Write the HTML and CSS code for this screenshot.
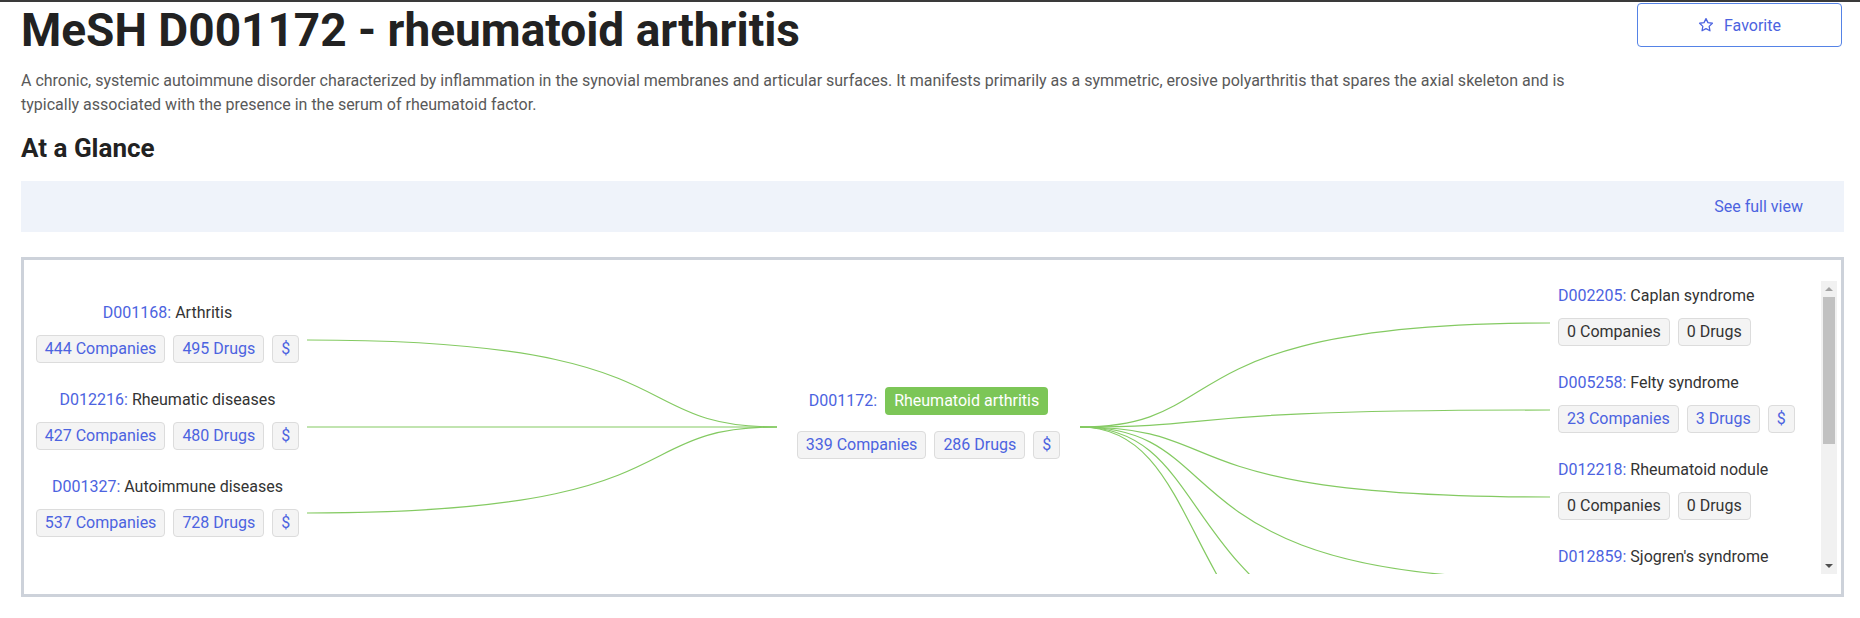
FILE: index.html
```html
<!DOCTYPE html>
<html lang="en">
<head>
  <meta charset="UTF-8" />
  <meta name="viewport" content="width=device-width, initial-scale=1.0"/>
  <title>MeSH D001172 - rheumatoid arthritis</title>
  <link rel="stylesheet" href="styles.css">
</head>
<body>

  <div class="page">
    <div class="header">
      <h1>MeSH D001172 - rheumatoid arthritis</h1>
      <button class="fav-btn" type="button">
        <svg width="16" height="16" viewBox="0 0 16 16">
          <path d="M8 1.6l1.95 4.05 4.45.6-3.25 3.1.8 4.4L8 11.6l-3.95 2.15.8-4.4L1.6 6.250l4.45-.6z" fill="none" stroke="#4c63e0" stroke-width="1.3" stroke-linejoin="round"/>
        </svg>
        Favorite
      </button>
    </div>

    <p class="desc">A chronic, systemic autoimmune disorder characterized by inflammation in the synovial membranes and articular surfaces. It manifests primarily as a symmetric, erosive polyarthritis that spares the axial skeleton and is typically associated with the presence in the serum of rheumatoid factor.</p>

    <h2>At a Glance</h2>

    <div class="glance-bar">
      <a href="#" class="full-view">See full view</a>
    </div>

    <div class="graph-box">
      <div class="graph">
        <svg class="links" width="1797" height="293" viewBox="0 0 1797 293">
          <g fill="none" stroke="#84ca62" stroke-width="1.2">
            <path d="M283,59 C676,59 596,146 753,146"/>
            <path d="M283,146 L753,146"/>
            <path d="M283,232 C676,232 596,146 753,146"/>
            <path d="M1056,146 C1213,146 1133,42 1526,42"/>
            <path d="M1056,146 C1213,146 1133,129 1526,129"/>
            <path d="M1056,146 C1213,146 1133,216 1526,216"/>
            <path d="M1056,146 C1213,146 1133,298 1526,298"/>
            <path d="M1056,146 C1213,146 1133,389 1526,389"/>
            <path d="M1056,146 C1213,146 1133,476 1526,476"/>
          </g>
        </svg>

        <div class="col col-left">
          <div class="node">
            <div class="label"><a href="#">D001168:</a> Arthritis</div>
            <div class="chips">
              <span class="chip">444 Companies</span>
              <span class="chip">495 Drugs</span>
              <span class="chip">$</span>
            </div>
          </div>
          <div class="node">
            <div class="label"><a href="#">D012216:</a> Rheumatic diseases</div>
            <div class="chips">
              <span class="chip">427 Companies</span>
              <span class="chip">480 Drugs</span>
              <span class="chip">$</span>
            </div>
          </div>
          <div class="node">
            <div class="label"><a href="#">D001327:</a> Autoimmune diseases</div>
            <div class="chips">
              <span class="chip">537 Companies</span>
              <span class="chip">728 Drugs</span>
              <span class="chip">$</span>
            </div>
          </div>
        </div>

        <div class="col col-center">
          <div class="node">
            <div class="label main-label"><a href="#">D001172:</a> <span class="current">Rheumatoid arthritis</span></div>
            <div class="chips">
              <span class="chip">339 Companies</span>
              <span class="chip">286 Drugs</span>
              <span class="chip">$</span>
            </div>
          </div>
        </div>

        <div class="col col-right">
          <div class="node">
            <div class="label"><a href="#">D002205:</a> Caplan syndrome</div>
            <div class="chips">
              <span class="chip empty">0 Companies</span>
              <span class="chip empty">0 Drugs</span>
            </div>
          </div>
          <div class="node">
            <div class="label"><a href="#">D005258:</a> Felty syndrome</div>
            <div class="chips">
              <span class="chip">23 Companies</span>
              <span class="chip">3 Drugs</span>
              <span class="chip">$</span>
            </div>
          </div>
          <div class="node">
            <div class="label"><a href="#">D012218:</a> Rheumatoid nodule</div>
            <div class="chips">
              <span class="chip empty">0 Companies</span>
              <span class="chip empty">0 Drugs</span>
            </div>
          </div>
          <div class="node">
            <div class="label"><a href="#">D012859:</a> Sjogren's syndrome</div>
          </div>
        </div>
      </div>

      <div class="scrollbar">
        <div class="sb-btn"><span class="arrow-up"></span></div>
        <div class="sb-track"><div class="sb-thumb"></div></div>
        <div class="sb-btn"><span class="arrow-down"></span></div>
      </div>
    </div>
  </div>

</body>
</html>
```

FILE: styles.css
```css
body {
  margin: 0;
  font-family: Roboto, "Liberation Sans", Arial, sans-serif;
  color: #333;
  background: #fff;
  border-top: 2px solid #3a3a3a;
}

a {
  color: #4c63e0;
  text-decoration: none;
}

.page {
  padding: 0 16px 20px 21px;
}

.header {
  display: flex;
  justify-content: space-between;
  align-items: flex-start;
}

h1 {
  margin: 0;
  font-size: 46px;
  line-height: 57px;
  font-weight: 700;
  color: #222;
}

.fav-btn {
  margin: 1px 2px 0 0;
  width: 205px;
  height: 44px;
  display: flex;
  align-items: center;
  justify-content: center;
  gap: 10px;
  background: #fff;
  border: 1px solid #5583e6;
  border-radius: 4px;
  color: #4c63e0;
  font-family: inherit;
  font-size: 16px;
  cursor: pointer;
}

.desc {
  margin: 10px 0 0;
  max-width: 1580px;
  font-size: 16px;
  line-height: 24px;
  color: #595959;
}

h2 {
  margin: 16px 0 0;
  font-size: 26px;
  line-height: 1.2;
  font-weight: 700;
  color: #222;
}

.glance-bar {
  margin-top: 17px;
  height: 51px;
  background: #eff3fa;
  display: flex;
  align-items: center;
  justify-content: flex-end;
  padding-right: 41px;
}

.full-view {
  font-size: 16px;
}

.graph-box {
  margin-top: 25px;
  border: 3px solid #cdd2da;
  padding: 21px 4px 20px 0;
  display: flex;
}

.graph {
  position: relative;
  flex: 1;
  height: 293px;
  overflow: hidden;
  display: flex;
  align-items: flex-start;
  gap: 498px;
  padding-left: 12px;
}

.links {
  position: absolute;
  left: 0;
  top: 0;
}

.col {
  position: relative;
  display: flex;
  flex-direction: column;
  gap: 26px;
}

.col-left {
  width: 263px;
  margin-top: 21px;
  align-items: center;
}

.col-center {
  width: 263px;
  margin-top: 106px;
  align-items: center;
}

.col-right {
  margin-top: 4px;
  align-items: flex-start;
}

.node {
  display: flex;
  flex-direction: column;
  align-items: inherit;
}

.label {
  font-size: 16px;
  line-height: 22px;
  color: #333;
  white-space: nowrap;
}

.main-label {
  display: flex;
  align-items: center;
  gap: 8px;
  line-height: 28px;
}

.current {
  background: #7cc657;
  color: #fff;
  border-radius: 4px;
  padding: 0 9px;
  line-height: 28px;
}

.chips {
  display: flex;
  gap: 8px;
  margin-top: 11px;
}

.main-label + .chips {
  margin-top: 16px;
}

.chip {
  background: #f4f4f4;
  border: 1px solid #dcdcdc;
  border-radius: 4px;
  padding: 0 8px;
  font-size: 16px;
  line-height: 26px;
  color: #4c63e0;
  white-space: nowrap;
}

.chip.empty {
  color: #333;
}

.scrollbar {
  width: 16px;
  height: 293px;
  background: #f1f1f1;
  display: flex;
  flex-direction: column;
}

.sb-btn {
  height: 16px;
  display: flex;
  align-items: center;
  justify-content: center;
}

.arrow-up {
  border-left: 4px solid transparent;
  border-right: 4px solid transparent;
  border-bottom: 4px solid #a3a3a3;
}

.arrow-down {
  border-left: 4px solid transparent;
  border-right: 4px solid transparent;
  border-top: 4px solid #505050;
}

.sb-track {
  flex: 1;
  padding: 0 2px;
}

.sb-thumb {
  height: 147px;
  background: #c1c1c1;
}
```
